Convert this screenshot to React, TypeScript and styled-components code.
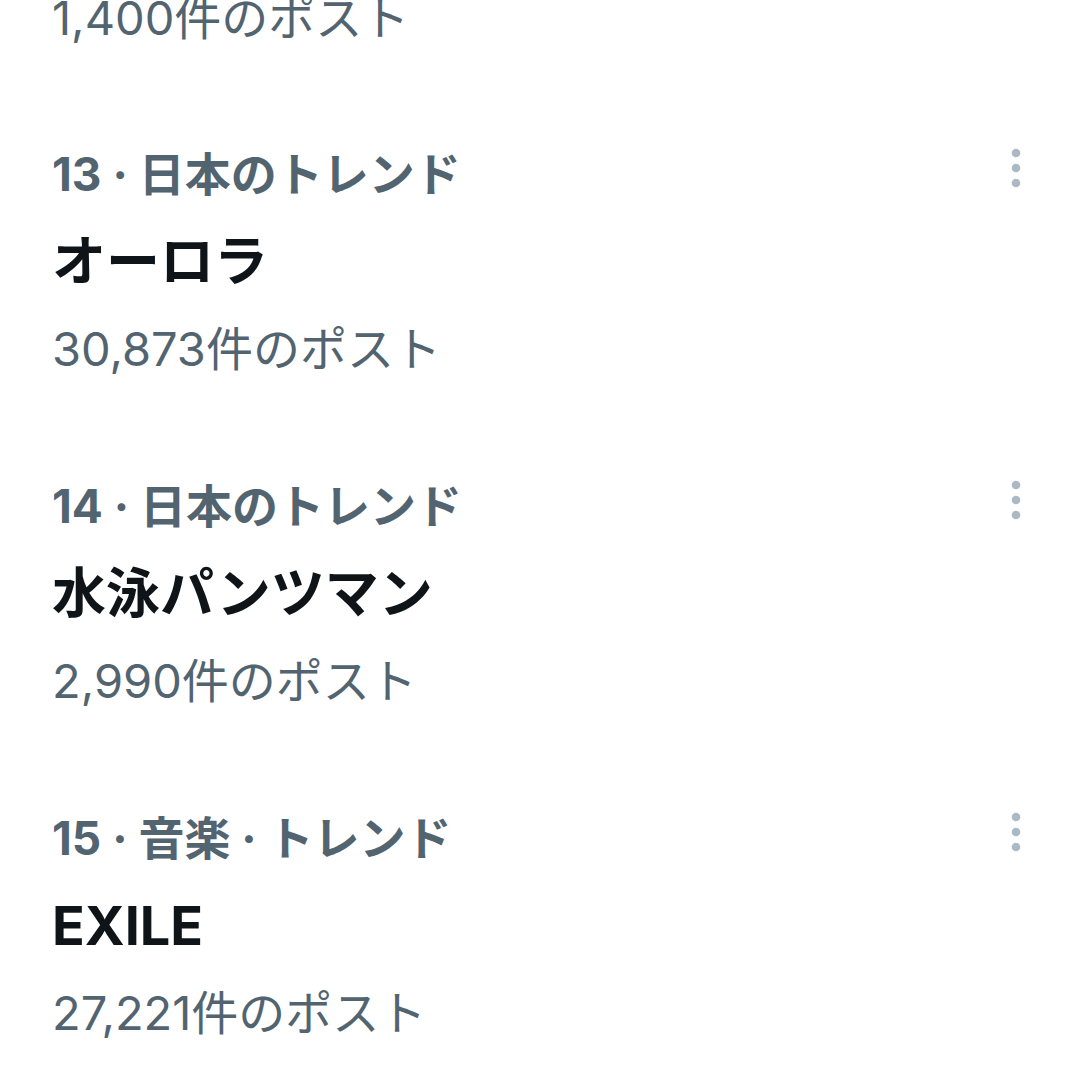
import React from "react";
import styled, { createGlobalStyle } from "styled-components";

const GlobalStyle = createGlobalStyle`
  html, body {
    margin: 0;
    padding: 0;
    background: #ffffff;
  }
  body {
    width: 1080px;
    height: 1080px;
    overflow: hidden;
    font-family: "Inter", "Noto Sans CJK JP", sans-serif;
  }
`;

const List = styled.div`
  display: flex;
  flex-direction: column;
  margin-top: -12px;
`;

const Item = styled.div<{ $tail?: boolean }>`
  display: flex;
  flex-direction: column;
  padding: ${({ $tail }) => ($tail ? "0 59px 48px 52px" : "48px 59px 49px 52px")};
`;

const TopRow = styled.div`
  display: flex;
  justify-content: space-between;
  align-items: flex-start;
`;

const Category = styled.div`
  font-size: 46px;
  line-height: 60px;
  font-weight: 700;
  color: #536471;
`;

const Title = styled.div`
  margin-top: 21px;
  font-size: 54px;
  line-height: 74px;
  font-weight: 700;
  color: #0f1419;
`;

const Count = styled.div<{ $tail?: boolean }>`
  margin-top: ${({ $tail }) => ($tail ? "0" : "20px")};
  font-size: 47px;
  line-height: 60px;
  font-weight: 400;
  color: #536471;
`;

const MoreButton = styled.div`
  display: flex;
  margin-top: 1px;
`;

const MoreIcon = () => (
  <svg width="10" height="46" viewBox="0 0 10 46">
    <circle cx="5" cy="8" r="4.3" fill="#aab9c4" />
    <circle cx="5" cy="23" r="4.3" fill="#aab9c4" />
    <circle cx="5" cy="38" r="4.3" fill="#aab9c4" />
  </svg>
);

const trends = [
  { category: "13 · 日本のトレンド", title: "オーロラ", count: "30,873件のポスト" },
  { category: "14 · 日本のトレンド", title: "水泳パンツマン", count: "2,990件のポスト" },
  { category: "15 · 音楽 · トレンド", title: "EXILE", count: "27,221件のポスト" },
];

export default function App() {
  return (
    <>
      <GlobalStyle />
      <List>
        <Item $tail>
          <Count $tail>1,400件のポスト</Count>
        </Item>
        {trends.map((t) => (
          <Item key={t.category}>
            <TopRow>
              <Category>{t.category}</Category>
              <MoreButton>
                <MoreIcon />
              </MoreButton>
            </TopRow>
            <Title>{t.title}</Title>
            <Count>{t.count}</Count>
          </Item>
        ))}
      </List>
    </>
  );
}
